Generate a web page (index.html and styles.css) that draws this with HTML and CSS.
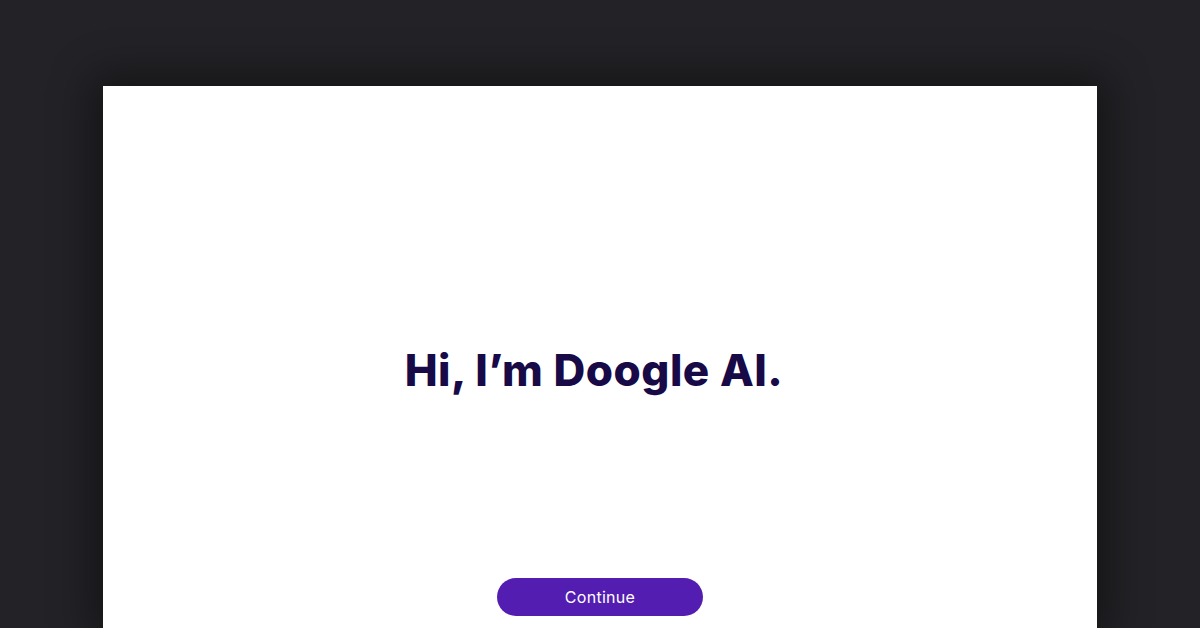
FILE: index.html
```html
<!DOCTYPE html>
<html lang="en">
<head>
    <meta charset="UTF-8">
    <meta name="viewport" content="width=device-width, initial-scale=1.0">
    <title>Doogle AI</title>
    <link rel="stylesheet" href="styles.css">
</head>
<body>
    <div class="intro-card">
        <h1 class="intro-title">Hi, I’m Doogle AI.</h1>
        <button class="intro-button">Continue</button>
    </div>
</body>
</html>
```

FILE: styles.css
```css
body {
    font-family: "Inter", "Noto Sans", sans-serif;
    margin: 0;
    padding: 86px 103px 0;
    background-color: #232327;
    height: 100vh;
    box-sizing: border-box;
    overflow: hidden;
    display: flex;
    flex-direction: column;
}
.intro-card {
    flex-grow: 1;
    background-color: #fff;
    box-shadow: 0 0 40px 10px rgba(0, 0, 0, 0.45);
    display: flex;
    flex-direction: column;
    align-items: center;
    justify-content: space-between;
    padding: 256px 0 12px;
}
.intro-title {
    margin: 0 12px 0 0;
    font-size: 44px;
    line-height: 56px;
    font-weight: 800;
    letter-spacing: 0.5px;
    color: #170a47;
}
.intro-button {
    width: 206px;
    height: 38px;
    border: none;
    border-radius: 19px;
    background-color: #521db0;
    color: #fff;
    font-family: "Inter", "Noto Sans", sans-serif;
    font-size: 16px;
    letter-spacing: 0.3px;
    cursor: pointer;
}
```
